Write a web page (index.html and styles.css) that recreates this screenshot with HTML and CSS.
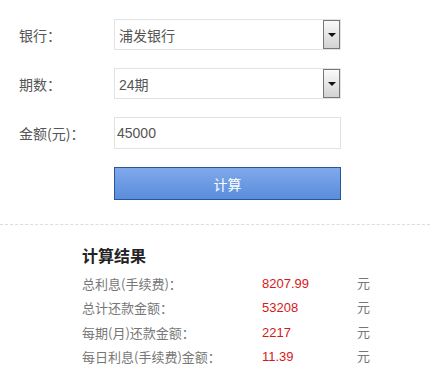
FILE: index.html
```html
<!DOCTYPE html>
<html lang="zh-CN">
<head>
    <meta charset="UTF-8">
    <title>计算器</title>
    <link rel="stylesheet" href="styles.css">
</head>
<body>

    <div class="calc-form">
        <div class="form-row">
            <label class="form-label">银行：</label>
            <div class="select-box">
                <span class="select-text">浦发银行</span>
                <span class="select-btn"><i class="arrow"></i></span>
            </div>
        </div>
        <div class="form-row">
            <label class="form-label">期数：</label>
            <div class="select-box">
                <span class="select-text">24期</span>
                <span class="select-btn"><i class="arrow"></i></span>
            </div>
        </div>
        <div class="form-row">
            <label class="form-label">金额(元)：</label>
            <div class="text-input">45000</div>
        </div>
        <div class="form-row">
            <span class="form-label"></span>
            <button class="calc-btn">计算</button>
        </div>
    </div>

    <div class="result">
        <h3 class="result-title">计算结果</h3>
        <div class="result-row">
            <span class="result-label">总利息(手续费)：</span>
            <span class="result-value">8207.99</span>
            <span class="result-unit">元</span>
        </div>
        <div class="result-row">
            <span class="result-label">总计还款金额：</span>
            <span class="result-value">53208</span>
            <span class="result-unit">元</span>
        </div>
        <div class="result-row">
            <span class="result-label">每期(月)还款金额：</span>
            <span class="result-value">2217</span>
            <span class="result-unit">元</span>
        </div>
        <div class="result-row">
            <span class="result-label">每日利息(手续费)金额：</span>
            <span class="result-value">11.39</span>
            <span class="result-unit">元</span>
        </div>
    </div>

</body>
</html>
```

FILE: styles.css
```css
body {
    margin: 0;
    padding: 0;
    background: #fff;
    color: #555;
    font-family: "Liberation Sans", "Noto Sans CJK SC", sans-serif;
}
.calc-form {
    padding: 19px 0 0 19px;
    display: flex;
    flex-direction: column;
    gap: 18px;
}
.form-row {
    display: flex;
    align-items: center;
}
.form-label {
    width: 95px;
    font-size: 14px;
    color: #555;
    font-family: "Noto Sans CJK TC", "Noto Sans CJK SC", sans-serif;
}
.select-box {
    width: 225px;
    height: 29px;
    border: 1px solid #e2e2e2;
    display: flex;
    align-items: center;
    justify-content: space-between;
}
.select-text {
    padding-left: 4px;
    font-size: 14px;
    color: #555;
}
.select-btn {
    width: 15px;
    height: 27px;
    border: 1px solid #777;
    background: linear-gradient(#fafafa, #d2d2d2);
    display: flex;
    align-items: center;
    justify-content: center;
}
.arrow {
    width: 0;
    height: 0;
    border-left: 4px solid transparent;
    border-right: 4px solid transparent;
    border-top: 4px solid #111;
}
.text-input {
    width: 223px;
    height: 30px;
    line-height: 30px;
    padding-left: 2px;
    border: 1px solid #e2e2e2;
    font-size: 14px;
    color: #555;
}
.calc-btn {
    width: 227px;
    height: 33px;
    border: 1px solid #2a5597;
    background: linear-gradient(#7fa9ea, #5a8ddd);
    color: #fff;
    font-size: 14px;
    font-family: inherit;
    padding: 0;
}
.result {
    margin-top: 24px;
    border-top: 1px dashed #ddd;
    padding: 22px 0 0 82px;
}
.result-title {
    margin: 0 0 5px 0;
    font-size: 16px;
    line-height: 20px;
    color: #222;
    font-weight: bold;
}
.result-row {
    display: flex;
    font-size: 13px;
    line-height: 24.3px;
}
.result-label {
    width: 180px;
    color: #777;
    font-family: "Noto Sans CJK TC", "Noto Sans CJK SC", sans-serif;
}
.result-value {
    width: 95px;
    color: #d71818;
}
.result-unit {
    color: #777;
}
```
